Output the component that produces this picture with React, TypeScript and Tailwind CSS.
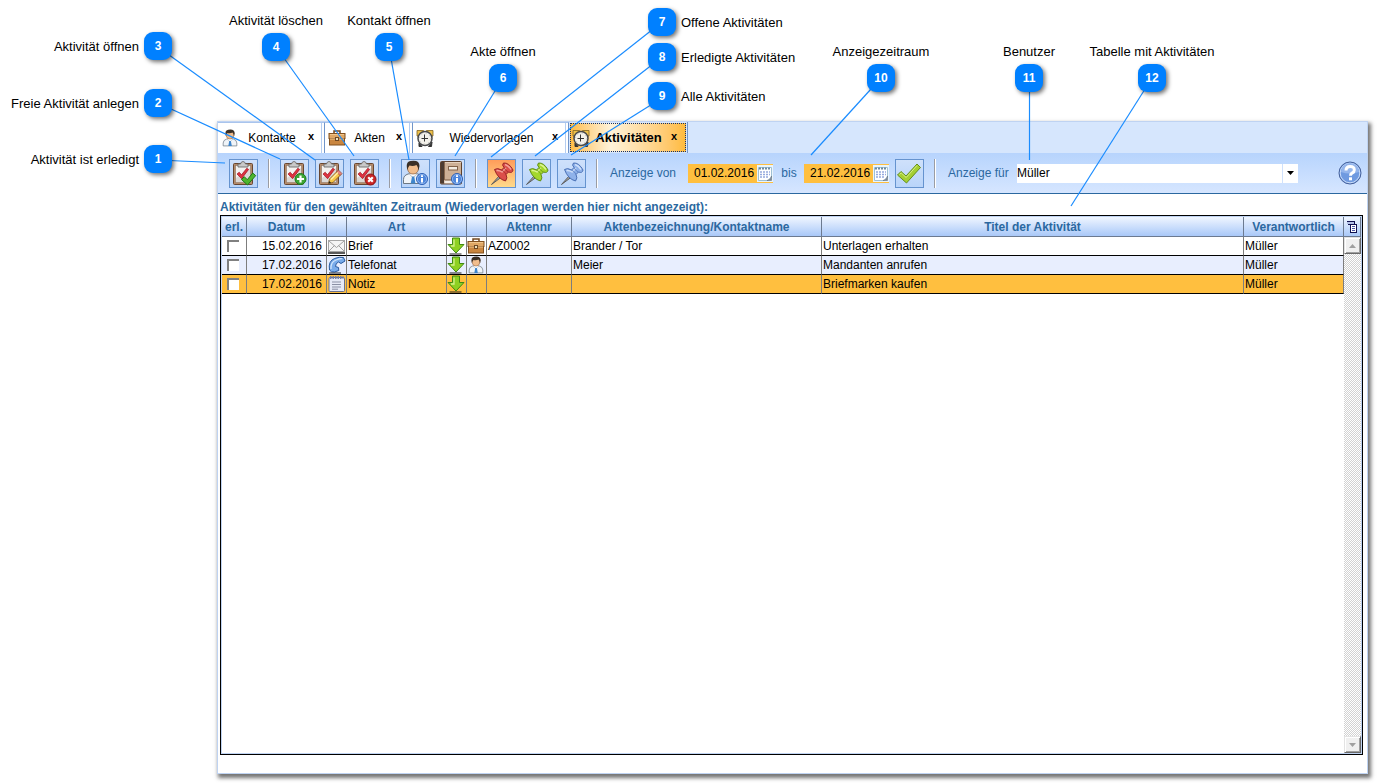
import { ReactNode } from "react";
import clsx from "clsx";

/* ---------- icons ---------- */

function CheckBadge() {
  return (
    <path
      d="M11.500 19.500l2.800-2.800 3 3 5.400-6.700 3 2.600-8.200 9.400z"
      fill="#4fb52d"
      stroke="#1d7a16"
      strokeLinejoin="round"
    />
  );
}

function PlusBadge() {
  return (
    <>
      <circle cx="19.500" cy="19" r="5.500" fill="#3fa535" stroke="#187a1a" />
      <path d="M19.500 15.500v7M16 19h7" stroke="#fff" strokeWidth="2.200" />
    </>
  );
}

function PencilBadge() {
  return (
    <>
      <path d="M12.500 23.500l1-4.500 8-8 3.500 3.500-8 8z" fill="#f6c648" stroke="#8a5a1c" strokeWidth="0.9" />
      <path d="M20.500 12l2-2 3.500 3.500-2 2z" fill="#e8837c" stroke="#8a4a3c" strokeWidth="0.7" />
      <path d="M15 19.500l7-7" stroke="#fff0a8" strokeWidth="1.500" />
      <path d="M12.500 23.500l.7-2.500 2 2z" fill="#222" />
    </>
  );
}

function CrossBadge() {
  return (
    <>
      <circle cx="19.500" cy="19.500" r="5.500" fill="#c92525" stroke="#8d1014" />
      <path d="M17.200 17.200l4.600 4.600M21.800 17.200l-4.600 4.600" stroke="#fff" strokeWidth="2.200" />
    </>
  );
}

function ClipboardIcon({ children }: { children: ReactNode }) {
  return (
    <svg viewBox="0 0 27 27" className="size-[27px]" aria-hidden="true">
      <rect x="3.500" y="3.500" width="19" height="21" rx="1" fill="#b58a68" stroke="#684630" />
      <rect x="5.500" y="5.500" width="15" height="17" fill="#f4f2f0" stroke="#8d7462" strokeWidth="0.6" />
      <path d="M6 22V18L20 8v14z" fill="#dcd9d6" />
      <path d="M8 5.500V4h2.500q.5-2.500 2.500-2.500T15.500 4H18v3H8z" fill="#c9c9c9" stroke="#6c6c6c" strokeWidth="0.9" />
      <path d="M7 14l2.200-1.800 2.300 2.600 5.300-6.600 1.800 1.200-7 9.300z" fill="#dd3340" stroke="#a31522" strokeWidth="0.7" />
      {children}
    </svg>
  );
}

function InfoBadge() {
  return (
    <>
      <circle cx="20" cy="19" r="5.500" fill="#4d86dc" stroke="#2b5fb5" />
      <circle cx="20" cy="19" r="4.600" fill="none" stroke="#a9c8f5" strokeWidth="0.7" />
      <path d="M20 18v4.500M20 15.200v1.800" stroke="#fff" strokeWidth="2" />
    </>
  );
}

function PersonFigure() {
  return (
    <>
      <path d="M3.500 23.500v-4q0-4 4.500-5.500l5-1 5 1q4.500 1.500 4.500 5.500v4z" fill="#f0f4f8" stroke="#6d7883" />
      <path d="M9.500 14l3.500 4 3.500-4-1-2.500h-5z" fill="#fff" stroke="#9aa6b1" strokeWidth="0.7" />
      <path d="M12 16.500h2.200l1.300 7h-4.800z" fill="#3f86cc" />
      <path d="M7.500 6q0-4 5.500-4t5.500 4v3q-1 5-5.500 5T7.500 9z" fill="#f1bd8c" stroke="#8a5a38" strokeWidth="0.7" />
      <path d="M7.500 10Q5 2 10.500 1q9-1.500 9 5l-1 4.500q-.5-4-2-5.500-3.500 1.500-7 .5-1.500 1.500-2 4.500z" fill="#3b3026" />
    </>
  );
}

function PersonIcon() {
  return (
    <svg viewBox="1 0 24 25" className="size-[18px]" aria-hidden="true">
      <PersonFigure />
    </svg>
  );
}

function PersonInfoIcon() {
  return (
    <svg viewBox="0 0 27 27" className="size-[27px]" aria-hidden="true">
      <g transform="translate(-2 0)">
        <PersonFigure />
      </g>
      <InfoBadge />
    </svg>
  );
}

function BookIcon() {
  return (
    <svg viewBox="0 0 27 27" className="size-[27px]" aria-hidden="true">
      <rect x="3.500" y="1.500" width="21" height="22.500" rx="1" fill="#cdb096" stroke="#5d412e" />
      <rect x="4" y="2" width="3" height="21.500" fill="#4c3b30" />
      <path d="M7.500 2v18" stroke="#8a6a50" />
      <path d="M8 2.500h16" stroke="#e6d2bd" />
      <rect x="11.500" y="6.500" width="9" height="3.500" fill="#f3ece2" stroke="#806148" />
      <path d="M8 20h16" stroke="#7b5c44" />
      <path d="M7.500 22h16.500" stroke="#f4eee6" strokeWidth="2.500" />
      <InfoBadge />
    </svg>
  );
}

interface PinProps {
  fill: string;
  light: string;
  stroke: string;
}

function PinIcon({ fill, light, stroke }: PinProps) {
  return (
    <svg viewBox="0 0 27 27" className="size-[27px]" aria-hidden="true">
      <path d="M3.500 24.500l8-9 1.800 1.700z" fill="#a5a5a5" stroke="#555" strokeWidth="0.9" />
      <path
        d="M6.500 9.500q3-2 7 .5L16 7.500q-2.500-2.500-.5-4.500 5.500-.5 9.500 7-.5 3.500-4.500 2L18 14.500q2 3.500-.5 6.500Q10 19 6.500 9.500z"
        fill={fill}
        stroke={stroke}
        strokeLinejoin="round"
      />
      <path d="M8.500 10.500q2.500-.5 5.500 1.500L18 8M17 4.500q3.500 1 6 5" fill="none" stroke={light} strokeWidth="1.500" />
      <path d="M13.500 10q3.500 1.500 4.500 4.500M16 7.500q1.500 3.500 4.500 4.500" fill="none" stroke={stroke} strokeWidth="0.7" />
    </svg>
  );
}

function BriefcaseIcon() {
  return (
    <svg viewBox="0 0 18 18" className="size-[18px]" aria-hidden="true">
      <path d="M6 4.500V2h6v2.500" fill="none" stroke="#74491f" strokeWidth="1.500" />
      <rect x="1" y="4.500" width="16" height="5" fill="#dfa765" stroke="#81501f" />
      <rect x="1.500" y="9.500" width="15" height="6.500" fill="#c98640" stroke="#81501f" />
      <path d="M2 10h14M2 5.500h14" stroke="#f0c58b" />
      <rect x="7.500" y="8.500" width="3" height="3" fill="#eee2bc" stroke="#6d4824" />
    </svg>
  );
}

function ClockIcon() {
  return (
    <svg viewBox="0 0 18 18" className="size-[18px]" aria-hidden="true">
      <path d="M3 17.500h3L3 14zM15.500 17.500h-3L16 13z" fill="#333" stroke="#333" />
      <path d="M1 7V1.500h6.500L9 3l1.500-1.500H17V7z" fill="#edc04a" stroke="#80631f" strokeWidth="0.8" />
      <circle cx="9" cy="9.500" r="7" fill="#f3f1ea" stroke="#48494b" strokeWidth="1.500" />
      <circle cx="9" cy="9.500" r="5.500" fill="none" stroke="#b9babb" strokeDasharray="1 3.320" />
      <path d="M8.500 5.500v7M5.500 9.500h6.500" stroke="#333" />
    </svg>
  );
}

function CalendarIcon() {
  return (
    <svg viewBox="0 0 16 17" className="h-[17px] w-4" aria-hidden="true">
      <rect width="16" height="17" fill="#e9f4fb" />
      <path d="M1.500 2.500h13V12l-3.500 3.500H1.500z" fill="#fff" stroke="#9fc0d4" />
      <path d="M2 3.500h12" stroke="#6d8aa0" strokeWidth="2" strokeDasharray="2 1" />
      <path d="M3 7h10M3 9.500h10M3 12h8" stroke="#95a9dd" strokeWidth="1.500" strokeDasharray="2 1" />
      <path d="M14.500 11v4.500H10q3.500-.5 4.500-4.500z" fill="#7b8898" stroke="#5d6978" strokeWidth="0.5" />
    </svg>
  );
}

function TickIcon() {
  return (
    <svg viewBox="0 0 27 27" className="size-[27px]" aria-hidden="true">
      <path
        d="M1.500 15l3.500-3.500 5 4.500L21 4l3.500 3.500L10.500 23z"
        fill="#a5cf33"
        stroke="#648f1a"
        strokeLinejoin="round"
      />
      <path d="M3.500 14.500l1.700-1.500 5 4.500L21 5.500" fill="none" stroke="#d7ef85" />
    </svg>
  );
}

function HelpIcon() {
  return (
    <svg viewBox="0 0 24 24" className="size-6" aria-hidden="true">
      <circle cx="12" cy="12" r="11" fill="#6f9ae0" stroke="#47619a" />
      <circle cx="12" cy="12" r="9.800" fill="none" stroke="#c9dcf8" />
      <path d="M3 11a9 9 0 0 1 18 0q-9 3-18 0z" fill="#94b5ec" />
      <path d="M8 9.500Q8 5.500 12.200 5.500T16.300 9q0 2-2.300 3.200-1.500.8-1.500 2.600" fill="none" stroke="#fff" strokeWidth="3" />
      <rect x="11" y="16.300" width="3" height="3" fill="#fff" />
    </svg>
  );
}

function DownArrowIcon() {
  return (
    <svg viewBox="0 0 18 18" className="size-[18px]" aria-hidden="true">
      <path d="M5.500 1h7v6.500h4.500L9 16 1 7.500h4.500z" fill="#8ed022" stroke="#408a12" strokeLinejoin="round" />
      <path d="M7 2.500v6.500H4" fill="none" stroke="#d3f28b" strokeWidth="1.300" />
      <path d="M2.500 17h12" stroke="#222" />
    </svg>
  );
}

function LetterIcon() {
  return (
    <svg viewBox="0 0 18 18" className="size-[18px]" aria-hidden="true">
      <rect x="0.500" y="3.500" width="16" height="11" fill="#f5f5f5" stroke="#a6a6a6" />
      <path d="M1 4l7.500 6.500L16 4M1 14l5.500-5.500M16 14l-5.500-5.500" fill="none" stroke="#a0a0a0" />
      <path d="M0 16h17" stroke="#222" strokeWidth="1.500" />
    </svg>
  );
}

function PhoneIcon() {
  return (
    <svg viewBox="0 0 18 18" className="size-[18px]" aria-hidden="true">
      <path
        d="M1.500 14Q0 5 6.500 2.500q5-2 9-1l1.500 3.500-4 2.500-2.500-1.500q-3 1-3 4.500l3 1 .3 3L6.500 16q-3.500.5-5-2z"
        fill="#79aceb"
        stroke="#27599f"
      />
      <path d="M3 13Q2.500 6 8 4t6-1" fill="none" stroke="#d2e6fc" strokeWidth="1.300" />
      <path d="M1 17h12" stroke="#222" />
    </svg>
  );
}

function NoteIcon() {
  return (
    <svg viewBox="0 0 18 18" className="size-[18px]" aria-hidden="true">
      <rect x="1" y="2.500" width="15.500" height="14" rx="1" fill="#e6e9f6" stroke="#69718f" />
      <path d="M2 2.500h13.500" stroke="#7480a8" strokeWidth="3" strokeDasharray="1.500 1" />
      <path d="M4 7h9M4 9.500h9M4 12h9M4 14.200h6" stroke="#8b90a5" />
    </svg>
  );
}

function ColumnsIcon() {
  return (
    <svg viewBox="0 0 11 12" className="h-3 w-[11px]" aria-hidden="true">
      <path d="M0 .5h8M1 3.500h3M7.500 1v2" stroke="#101050" />
      <path d="M0 2h7" stroke="#8d9ad0" />
      <rect x="3.500" y="3.500" width="6" height="8" fill="#fff" stroke="#101050" />
      <path d="M5 5.500h3M5 7.500h3M5 9.500h3" stroke="#4d57a8" />
    </svg>
  );
}

/* ---------- callouts ---------- */

interface CalloutProps {
  no: number;
  label: string;
  side: "left" | "right" | "top";
  place: string;
}

const callouts: CalloutProps[] = [
  { no: 1, label: "Aktivität ist erledigt", side: "left", place: "left-[144px] top-[145px]" },
  { no: 2, label: "Freie Aktivität anlegen", side: "left", place: "left-[144px] top-[89px]" },
  { no: 3, label: "Aktivität öffnen", side: "left", place: "left-[144px] top-8" },
  { no: 4, label: "Aktivität löschen", side: "top", place: "left-[262px] top-[33px]" },
  { no: 5, label: "Kontakt öffnen", side: "top", place: "left-[375px] top-[33px]" },
  { no: 6, label: "Akte öffnen", side: "top", place: "left-[489px] top-16" },
  { no: 7, label: "Offene Aktivitäten", side: "right", place: "left-[648px] top-2" },
  { no: 8, label: "Erledigte Aktivitäten", side: "right", place: "left-[648px] top-[43px]" },
  { no: 9, label: "Alle Aktivitäten", side: "right", place: "left-[648px] top-[82px]" },
  { no: 10, label: "Anzeigezeitraum", side: "top", place: "left-[867px] top-16" },
  { no: 11, label: "Benutzer", side: "top", place: "left-[1015px] top-16" },
  { no: 12, label: "Tabelle mit Aktivitäten", side: "top", place: "left-[1138px] top-16" },
];

// x1, y1, x2, y2
const pointers = [
  [158, 160, 225, 163],
  [158, 103, 280, 159],
  [158, 47, 315, 160],
  [276, 47, 354, 156],
  [389, 47, 409, 160],
  [503, 78, 455, 156],
  [662, 22, 491, 157],
  [662, 57, 535, 156],
  [662, 98, 571, 155],
  [881, 78, 811, 155],
  [1029.5, 78, 1029.5, 160],
  [1152, 78, 1071, 206],
];

function Callout({ no, label, side, place }: CalloutProps) {
  return (
    <div className={clsx("absolute size-7", place)}>
      <span className="flex size-7 items-center justify-center rounded-[9px] bg-[#0080ff] text-xs font-bold text-white shadow-[2px_2px_4px_rgba(0,0,0,0.55)]">
        {no}
      </span>
      <span
        className={clsx(
          "absolute text-[13px] leading-4 whitespace-nowrap",
          side === "left" && "top-[7px] right-[33px]",
          side === "right" && "top-[7px] left-[33px]",
          side === "top" && "bottom-8 left-1/2 -translate-x-1/2",
        )}
      >
        {label}
      </span>
    </div>
  );
}

function Callouts() {
  return (
    <div className="pointer-events-none absolute inset-0">
      <svg className="absolute inset-0 size-full" aria-hidden="true">
        {pointers.map(([x1, y1, x2, y2], i) => (
          <line key={i} x1={x1} y1={y1} x2={x2} y2={y2} stroke="#1a8cff" strokeWidth="1.2" />
        ))}
      </svg>
      {callouts.map((callout) => (
        <Callout key={callout.no} {...callout} />
      ))}
    </div>
  );
}

/* ---------- tabs ---------- */

interface TabProps {
  label: string;
  icon: ReactNode;
  width: string;
  active?: boolean;
}

const tabs: TabProps[] = [
  { label: "Kontakte", icon: <PersonIcon />, width: "w-[107px]" },
  { label: "Akten", icon: <BriefcaseIcon />, width: "w-[88px]" },
  { label: "Wiedervorlagen", icon: <ClockIcon />, width: "w-[156px]" },
  { label: "Aktivitäten", icon: <ClockIcon />, width: "w-[119px]", active: true },
];

function Tab({ label, icon, width, active }: TabProps) {
  return (
    <div
      className={clsx(
        "flex shrink-0 border-r border-[#7195c9]",
        width,
        active ? "bg-[#d6e6fd] p-px" : "border-t border-t-[#a9c4ec] bg-white pr-0.5",
      )}
    >
      <div
        className={clsx(
          "flex min-w-0 flex-1 items-center",
          active
            ? "border border-dotted border-[#14306a] bg-linear-to-r from-[#ffbd45] via-[#fff3da] via-35% to-[#ffbb3c] pl-px"
            : "border-r border-[#b5cdf0] pl-[3px]",
        )}
      >
        {icon}
        <button
          type="button"
          role="tab"
          aria-selected={!!active}
          className={clsx("flex-1 pl-1 text-center", active ? "text-[13px] font-bold" : "text-xs")}
        >
          {label}
        </button>
        <button
          type="button"
          aria-label={`${label} schließen`}
          className={clsx("pb-1 text-[11px] leading-4 font-bold", active ? "w-[22px]" : "w-5")}
        >
          x
        </button>
      </div>
    </div>
  );
}

/* ---------- toolbar ---------- */

interface ToolButtonProps {
  label: string;
  active?: boolean;
  children: ReactNode;
}

function ToolButton({ label, active, children }: ToolButtonProps) {
  return (
    <button
      type="button"
      aria-label={label}
      className={clsx(
        "flex size-[29px] shrink-0 items-center justify-center border border-[#6593cf]",
        active ? "bg-linear-to-b from-[#ff9c5a] to-[#ffd98a]" : "bg-linear-to-b from-[#cfe1fb] to-[#b9d4fa]",
      )}
    >
      {children}
    </button>
  );
}

function Separator() {
  return <span className="mx-2.5 h-[29px] w-0.5 shrink-0 border-r border-l border-r-white border-l-[#9a9ca3]" />;
}

function DateField({ id, label, value }: { id: string; label: string; value: string }) {
  return (
    <div className="flex h-[19px] w-[85px] shrink-0 items-center bg-[#ffbf3f]">
      <input
        id={id}
        aria-label={label}
        defaultValue={value}
        className="w-[69px] bg-transparent pl-1.5 text-xs text-black outline-none"
      />
      <button type="button" aria-label="Kalender">
        <CalendarIcon />
      </button>
    </div>
  );
}

function Toolbar() {
  return (
    <div className="flex h-[41px] shrink-0 items-center border-b border-[#2b68a0] bg-linear-to-b from-[#b7d4fd] to-[#d6e6ff] pr-[5px] pl-[11px] text-xs text-[#2b68a0]">
      <ToolButton label="Aktivität ist erledigt">
        <ClipboardIcon>
          <CheckBadge />
        </ClipboardIcon>
      </ToolButton>
      <Separator />
      <div className="flex gap-1.5">
        <ToolButton label="Freie Aktivität anlegen">
          <ClipboardIcon>
            <PlusBadge />
          </ClipboardIcon>
        </ToolButton>
        <ToolButton label="Aktivität öffnen">
          <ClipboardIcon>
            <PencilBadge />
          </ClipboardIcon>
        </ToolButton>
        <ToolButton label="Aktivität löschen">
          <ClipboardIcon>
            <CrossBadge />
          </ClipboardIcon>
        </ToolButton>
      </div>
      <Separator />
      <div className="flex gap-1.5">
        <ToolButton label="Kontakt öffnen">
          <PersonInfoIcon />
        </ToolButton>
        <ToolButton label="Akte öffnen">
          <BookIcon />
        </ToolButton>
      </div>
      <Separator />
      <div className="flex gap-1.5">
        <ToolButton label="Offene Aktivitäten" active>
          <PinIcon fill="#dc4e4a" light="#f5a39a" stroke="#982426" />
        </ToolButton>
        <ToolButton label="Erledigte Aktivitäten">
          <PinIcon fill="#a4d72c" light="#dcf490" stroke="#5f8e18" />
        </ToolButton>
        <ToolButton label="Alle Aktivitäten">
          <PinIcon fill="#8fb2ea" light="#cfe0fa" stroke="#4a70b5" />
        </ToolButton>
      </div>
      <Separator />
      <label htmlFor="from" className="w-20 shrink-0 pl-0.5">
        Anzeige von
      </label>
      <DateField id="from" label="Anzeige von" value="01.02.2016" />
      <label htmlFor="to" className="w-[31px] shrink-0 pl-px text-center">
        bis
      </label>
      <DateField id="to" label="bis" value="21.02.2016" />
      <div className="ml-1.5 flex">
        <ToolButton label="Zeitraum übernehmen">
          <TickIcon />
        </ToolButton>
      </div>
      <Separator />
      <label htmlFor="user" className="w-[71px] shrink-0 pl-0.5">
        Anzeige für
      </label>
      <div className="relative w-[281px]">
        <select id="user" className="block h-[19px] w-full appearance-none bg-white text-xs text-black outline-none">
          <option>Müller</option>
        </select>
        <span className="pointer-events-none absolute inset-y-0 right-0 flex w-4 items-center justify-center border-l border-[#cfe1fc]">
          <svg viewBox="0 0 7 4" className="h-1 w-[7px]" aria-hidden="true">
            <path d="M0 0h7L3.500 4z" fill="#000" />
          </svg>
        </span>
      </div>
      <button type="button" aria-label="Hilfe" className="ml-auto">
        <HelpIcon />
      </button>
    </div>
  );
}

/* ---------- table ---------- */

interface ActivityProps {
  date: string;
  icon: ReactNode;
  kind: string;
  source?: ReactNode;
  fileNo: string;
  name: string;
  title: string;
  owner: string;
  row: string;
}

const activities: ActivityProps[] = [
  {
    date: "15.02.2016",
    icon: <LetterIcon />,
    kind: "Brief",
    source: <BriefcaseIcon />,
    fileNo: "AZ0002",
    name: "Brander / Tor",
    title: "Unterlagen erhalten",
    owner: "Müller",
    row: "bg-white",
  },
  {
    date: "17.02.2016",
    icon: <PhoneIcon />,
    kind: "Telefonat",
    source: <PersonIcon />,
    fileNo: "",
    name: "Meier",
    title: "Mandanten anrufen",
    owner: "Müller",
    row: "bg-[#e8eefe]",
  },
  {
    date: "17.02.2016",
    icon: <NoteIcon />,
    kind: "Notiz",
    fileNo: "",
    name: "",
    title: "Briefmarken kaufen",
    owner: "Müller",
    row: "bg-[#ffbf3f]",
  },
];

const columns = [
  { label: "erl.", width: "w-[25px]" },
  { label: "Datum", width: "w-20" },
  { label: "", width: "w-5" },
  { label: "Art", width: "w-[100px]" },
  { label: "", width: "w-5" },
  { label: "", width: "w-5" },
  { label: "Aktennr", width: "w-[85px]" },
  { label: "Aktenbezeichnung/Kontaktname", width: "w-[250px]" },
  { label: "Titel der Aktivität", width: "" },
  { label: "Verantwortlich", width: "w-[100px]" },
];

function Cell({ className, children }: { className?: string; children?: ReactNode }) {
  return (
    <td className={clsx("h-[19px] border-r border-b border-r-[#7d7d7d] border-b-black p-0", className ?? "pl-px")}>
      {children}
    </td>
  );
}

function ActivityTable() {
  return (
    <table className="w-full table-fixed border-separate border-spacing-0 text-xs leading-4">
      <thead>
        <tr className="text-[#2b68a0]">
          {columns.map((column, i) => (
            <th
              key={i}
              className={clsx(
                "h-5 border-r border-b border-[#6c7a90] bg-linear-to-b from-[#f0f6ff] to-[#a9c8f8] p-0 text-center",
                column.width,
              )}
            >
              {column.label}
            </th>
          ))}
        </tr>
      </thead>
      <tbody>
        {activities.map((activity, i) => (
          <tr key={i} className={activity.row}>
            <Cell className="pl-[5px]">
              <input
                type="checkbox"
                aria-label={`${activity.title} erledigt`}
                className="block size-3 appearance-none border-t-2 border-l-2 border-[#808080] bg-white"
              />
            </Cell>
            <Cell className="pr-1 text-right">{activity.date}</Cell>
            <Cell>{activity.icon}</Cell>
            <Cell>{activity.kind}</Cell>
            <Cell className="pl-0">
              <DownArrowIcon />
            </Cell>
            <Cell className="pl-0">{activity.source}</Cell>
            <Cell>{activity.fileNo}</Cell>
            <Cell>{activity.name}</Cell>
            <Cell>{activity.title}</Cell>
            <Cell>{activity.owner}</Cell>
          </tr>
        ))}
      </tbody>
    </table>
  );
}

function ScrollButton({ up }: { up?: boolean }) {
  return (
    <button
      type="button"
      aria-label={up ? "Nach oben" : "Nach unten"}
      className="flex h-[17px] shrink-0 items-center justify-center border border-t-[#e3e3e3] border-r-[#696969] border-b-[#696969] border-l-[#e3e3e3] bg-[#f0f0f0] shadow-[inset_1px_1px_#fff,inset_-1px_-1px_#a0a0a0]"
    >
      <svg viewBox="0 0 7 4" className={clsx("h-1 w-[7px]", up && "rotate-180")} aria-hidden="true">
        <path d="M0 0h7L3.500 4z" fill="#a0a0a0" />
      </svg>
    </button>
  );
}

function Scrollbar() {
  return (
    <div className="flex w-[17px] shrink-0 flex-col">
      <button
        type="button"
        aria-label="Spalten auswählen"
        className="flex h-5 shrink-0 items-center justify-center border-r border-b border-[#6c7a90] bg-linear-to-b from-[#f0f6ff] to-[#a9c8f8]"
      >
        <ColumnsIcon />
      </button>
      <ScrollButton up />
      <div className="flex-1 bg-[repeating-conic-gradient(#d2d2d2_0_25%,#fff_0_50%)] bg-size-[2px_2px]" />
      <ScrollButton />
    </div>
  );
}

export default function App() {
  return (
    <div className="relative flex min-h-screen flex-col bg-white pt-[121px] pr-[9px] pb-[9px] pl-[217px] font-['Liberation_Sans',Arial,sans-serif] text-black">
      <main className="flex flex-1 flex-col border border-[#bfd3f2] bg-white shadow-[2px_3px_4px_1px_rgba(0,0,0,0.55)]">
        <div role="tablist" className="flex h-[31px] shrink-0 bg-[#d6e6fd]">
          {tabs.map((tab) => (
            <Tab key={tab.label} {...tab} />
          ))}
        </div>
        <Toolbar />
        <section className="flex flex-1 flex-col pt-1.5 pr-1 pb-[18px] pl-0.5">
          <h1 className="text-xs leading-[15px] font-bold text-[#2b68a0]">
            Aktivitäten für den gewählten Zeitraum (Wiedervorlagen werden hier nicht angezeigt):
          </h1>
          <div className="flex flex-1 border border-black">
            <div className="flex flex-1 border border-[#bfd3f2]">
              <div className="min-w-0 flex-1">
                <ActivityTable />
              </div>
              <Scrollbar />
            </div>
          </div>
        </section>
      </main>
      <Callouts />
    </div>
  );
}
